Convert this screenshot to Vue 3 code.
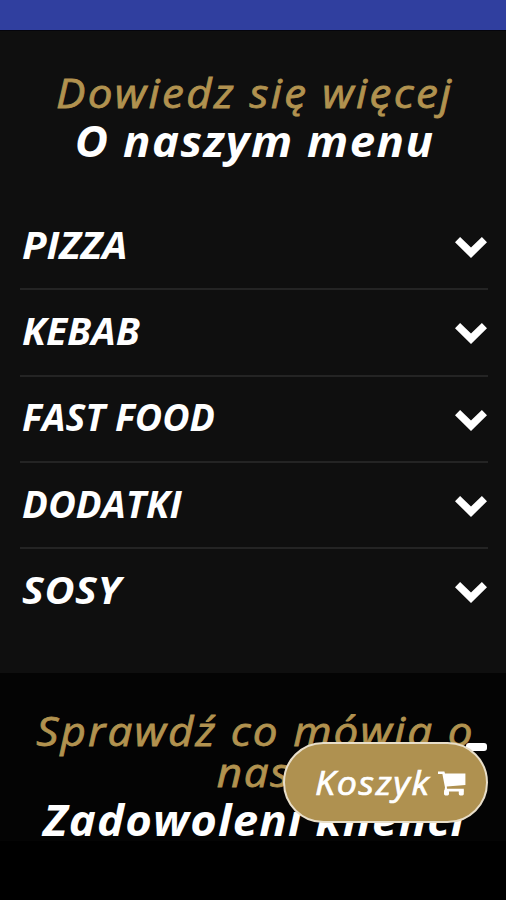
<script setup>
const items = [
  { name: 'PIZZA', key: 'pizza' },
  { name: 'KEBAB', key: 'kebab' },
  { name: 'FAST FOOD', key: 'fast' },
  { name: 'DODATKI', key: 'dodatki' },
  { name: 'SOSY', key: 'sosy' }
]
</script>

<template>
  <main class="page">
    <div class="topbar"></div>
    <section class="menu">
      <h2 class="heading">
        <span class="gold l1">Dowiedz się więcej</span>
        <span class="white l2">O naszym menu</span>
      </h2>
      <ul class="list">
        <li v-for="item in items" :key="item.key" class="row">
          <span class="name" :class="item.key">{{ item.name }}</span>
          <svg class="chevron" viewBox="0 0 34 22" width="34" height="22">
            <path d="M1 6.2 6.1 1 17 11.6 27.9 1 33 6.2 17 22Z" fill="#fff" />
          </svg>
        </li>
      </ul>
    </section>
    <section class="reviews">
      <h2 class="heading">
        <span class="gold l3">Sprawdź co mówią o</span>
        <span class="gold l4">nas</span>
        <span class="white l5">Zadowoleni klienci</span>
      </h2>
    </section>
    <span class="dash"></span>
    <button class="cart">
      <span class="cart-text">Koszyk</span>
      <svg class="cart-icon" viewBox="0 0 28 25" width="28" height="25">
        <path d="M0 .5H6.4L7 2.6H27.4V14L8.8 15.6L9 17.8H25.8V20.4H6.2L7 16.6L4.4 3H0Z" fill="#fff" />
        <rect x="6" y="19" width="5" height="5.4" rx="1.4" fill="#fff" />
        <rect x="20.8" y="19" width="5" height="5.4" rx="1.4" fill="#fff" />
      </svg>
    </button>
  </main>
</template>

<style>
body {
  margin: 0;
  background: #000;
}
</style>

<style scoped>
.page {
  position: relative;
  width: 506px;
  height: 900px;
  overflow: hidden;
  background: #000;
  font-family: "Open Sans", "Noto Sans", sans-serif;
  font-style: italic;
}
.topbar {
  height: 30px;
  background: #303f9f;
}
.menu {
  box-sizing: border-box;
  height: 643px;
  padding: 41px 18px 0 20px;
  background: #0f0f0f;
  border-top: 1px solid #05050c;
}
.heading {
  display: flex;
  flex-direction: column;
  align-items: center;
  margin: 0;
  font-weight: 400;
}
.heading span {
  display: block;
  white-space: nowrap;
}
.gold {
  height: 41px;
  line-height: 41px;
  font-size: 40px;
  color: #b1924f;
  -webkit-text-stroke: 0.8px #b1924f;
  transform: scaleX(1.1);
}
.white {
  height: 54px;
  line-height: 54px;
  font-size: 43px;
  font-weight: 700;
  color: #fff;
  transform: scaleX(1.06);
}
.l1 {
  letter-spacing: 2.1px;
  padding-left: 2px;
}
.l2 {
  margin-top: 1px;
  letter-spacing: 1.4px;
  padding-left: 1px;
}
.l3 {
  letter-spacing: 1.9px;
  padding-left: 5px;
}
.l4 {
  letter-spacing: 1.5px;
  padding-left: 2px;
}
.l5 {
  letter-spacing: 1.1px;
  padding-left: 2px;
  margin-top: 1px;
}
.list {
  margin: 36px 0 0;
  padding: 0;
  list-style: none;
}
.row {
  box-sizing: border-box;
  display: flex;
  align-items: center;
  justify-content: space-between;
  height: 86.3px;
  padding: 0 0 0 2px;
  border-bottom: 2px solid #242424;
}
.row:last-child {
  border-bottom-color: transparent;
}
.name {
  margin-top: -3px;
  font-size: 37.5px;
  font-weight: 700;
  line-height: 50px;
  color: #fff;
  white-space: nowrap;
  transform-origin: left center;
}
.pizza {
  transform: scaleX(1.07);
}
.kebab {
  transform: scaleX(1.04);
}
.dodatki {
  transform: scaleX(1.02);
}
.sosy {
  letter-spacing: 0.5px;
  transform: scaleX(1.1);
}
.chevron {
  margin-top: 2px;
}
.reviews {
  box-sizing: border-box;
  height: 168px;
  padding-top: 37px;
  background: #040404;
}
.dash {
  position: absolute;
  left: 466px;
  top: 743px;
  width: 21px;
  height: 8px;
  border-radius: 3px;
  background: #fff;
}
.cart {
  position: absolute;
  left: 283px;
  top: 742px;
  box-sizing: border-box;
  display: flex;
  align-items: center;
  width: 205px;
  height: 81px;
  padding: 0 0 0 30px;
  border: 2px solid #e9dfca;
  border-radius: 41px;
  background: #af9150;
  color: #fff;
  font: inherit;
  font-size: 32px;
}
.cart-text {
  flex: none;
  width: 123px;
  letter-spacing: 1.5px;
  white-space: nowrap;
  text-align: left;
  -webkit-text-stroke: 0.7px #fff;
  transform: scaleX(1.12);
  transform-origin: left center;
}
.cart-icon {
  margin-top: 2px;
}
</style>
